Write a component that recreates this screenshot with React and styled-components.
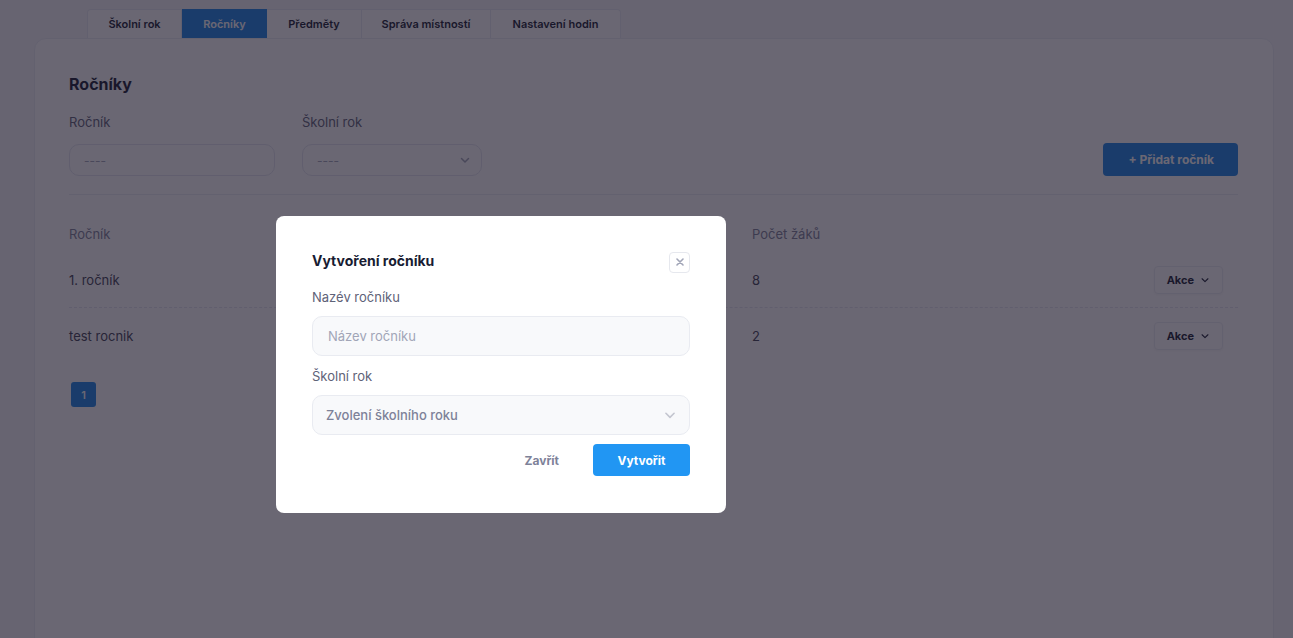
import React from "react";
import styled, { createGlobalStyle } from "styled-components";

const Global = createGlobalStyle`
  html, body { margin: 0; padding: 0; }
  body {
    background: #f5f6fa;
    font-family: Inter, "Noto Sans", "Liberation Sans", sans-serif;
    color: #181c32;
    overflow: hidden;
    height: 638px;
  }
  * { box-sizing: border-box; }
`;

const Page = styled.div`
  padding: 9px 19px 0 34px;
`;

const Tabs = styled.div`
  display: flex;
  margin-left: 53px;
`;

const Tab = styled.div`
  width: ${p => p.$w}px;
  height: 29px;
  display: flex;
  align-items: center;
  justify-content: center;
  font-size: 11px;
  font-weight: 600;
  color: ${p => (p.$active ? "#ffffff" : "#181c32")};
  background: ${p => (p.$active ? "#1b84e7" : "#ffffff")};
  border: 1px solid ${p => (p.$active ? "#1b84e7" : "#e9ebf2")};
  border-bottom: none;
  border-left: ${p => (p.$first || p.$active ? "" : "none")};
  border-radius: ${p => (p.$first ? "4px 0 0 0" : p.$last ? "0 4px 0 0" : "0")};
`;

const Card = styled.div`
  background: #ffffff;
  border: 1px solid #eceef4;
  border-radius: 12px;
  min-height: 620px;
  padding: 34px 35px 34px 34px;
`;

const Title = styled.h2`
  margin: 0;
  font-size: 16px;
  font-weight: 700;
  color: #181c32;
  line-height: 22px;
`;

const FilterRow = styled.div`
  display: flex;
  align-items: flex-end;
  gap: 27px;
  margin-top: 19px;
  padding-bottom: 18px;
  border-bottom: 1px solid #eceef3;
`;

const Field = styled.div`
  display: flex;
  flex-direction: column;
  gap: 14px;
`;

const Label = styled.label`
  font-size: 13px;
  color: #5e6278;
  line-height: 16px;
`;

const FilterBox = styled.div`
  width: ${p => p.$w}px;
  height: 32px;
  border: 1px solid #e4e6ef;
  border-radius: 10px;
  display: flex;
  align-items: center;
  justify-content: space-between;
  padding: 0 10px 0 14px;
  font-size: 12px;
  color: #a1a5b7;
  background: #ffffff;
`;

const AddButton = styled.button`
  margin-left: auto;
  height: 33px;
  padding: 0 24px 0 26px;
  border: none;
  border-radius: 4px;
  background: #1b84e7;
  color: #ffffff;
  font-family: inherit;
  font-size: 12px;
  font-weight: 700;
`;

const Table = styled.div`
  margin-top: 19px;
`;

const Row = styled.div`
  display: grid;
  grid-template-columns: 341px 342px 1fr auto;
  align-items: center;
  height: ${p => p.$h}px;
  padding-right: 15px;
  border-bottom: ${p => (p.$dashed ? "1px dashed #e4e6ef" : "none")};
  font-size: 13px;
  color: ${p => (p.$head ? "#7e8299" : "#3f4254")};
`;

const ActionButton = styled.button`
  display: flex;
  align-items: center;
  gap: 6px;
  height: 28px;
  padding: 0 12px;
  border: 1px solid #eceef3;
  border-radius: 4px;
  background: #ffffff;
  font-family: inherit;
  font-size: 11px;
  font-weight: 700;
  color: #181c32;
  box-shadow: 0 1px 3px rgba(0, 0, 0, 0.04);
`;

const Pager = styled.div`
  margin-top: 19px;
  margin-left: 2px;
  width: 25px;
  height: 25px;
  border-radius: 3px;
  background: #1b84e7;
  color: #ffffff;
  font-size: 11px;
  font-weight: 600;
  display: flex;
  align-items: center;
  justify-content: center;
`;

const Overlay = styled.div`
  position: fixed;
  inset: 0;
  background: rgba(26, 22, 40, 0.65);
  padding: 216px 0 0 276px;
`;

const Modal = styled.div`
  width: 450px;
  background: #ffffff;
  border-radius: 8px;
  padding: 35px 36px 37px;
`;

const ModalHead = styled.div`
  display: flex;
  align-items: center;
  justify-content: space-between;
  height: 22px;
`;

const ModalTitle = styled.h3`
  margin: 0;
  margin-top: -3px;
  font-size: 14px;
  font-weight: 700;
  color: #181c32;
`;

const CloseButton = styled.button`
  width: 21px;
  height: 21px;
  padding: 0;
  border: 1px solid #e6e8ee;
  border-radius: 4px;
  background: #ffffff;
  display: flex;
  align-items: center;
  justify-content: center;
`;

const ModalField = styled.div`
  display: flex;
  flex-direction: column;
  gap: 11px;
  margin-top: ${p => p.$mt}px;
`;

const ModalLabel = styled.label`
  font-size: 13px;
  color: #5e6278;
  line-height: 16px;
`;

const ModalInput = styled.div`
  height: 40px;
  border: 1px solid #e9ebf1;
  border-radius: 10px;
  background: #f8f9fb;
  display: flex;
  align-items: center;
  justify-content: space-between;
  padding: 0 12px 0 ${p => p.$pl}px;
  font-size: 13px;
  color: ${p => p.$color};
  font-weight: ${p => p.$weight || 400};
`;

const Footer = styled.div`
  display: flex;
  justify-content: flex-end;
  align-items: center;
  gap: 34px;
  margin-top: 9px;
`;

const GhostButton = styled.button`
  border: none;
  background: none;
  padding: 0;
  font-family: inherit;
  font-size: 12px;
  font-weight: 700;
  color: #7e8299;
`;

const PrimaryButton = styled.button`
  width: 97px;
  height: 32px;
  border: none;
  border-radius: 4px;
  background: #2196f3;
  color: #ffffff;
  font-family: inherit;
  font-size: 12px;
  font-weight: 700;
`;

const Chevron = ({ size = 12, color = "#a1a5b7", width = 1.5 }) => (
  <svg width={size} height={size} viewBox="0 0 12 12" fill="none">
    <path d="M2.5 4.5 L6 8 L9.5 4.5" stroke={color} strokeWidth={width} strokeLinecap="round" strokeLinejoin="round" />
  </svg>
);

const tabs = [
  { label: "Školní rok", w: 95 },
  { label: "Ročníky", w: 85, active: true },
  { label: "Předměty", w: 95 },
  { label: "Správa místností", w: 129 },
  { label: "Nastavení hodin", w: 130 },
];

const rows = [
  { name: "1. ročník", year: "2023/2024", count: "8", h: 55 },
  { name: "test rocnik", year: "2023/2024", count: "2", h: 55 },
];

export default function App() {
  return (
    <>
      <Global />
      <Page>
        <Tabs>
          {tabs.map((t, i) => (
            <Tab
              key={t.label}
              $w={t.w}
              $active={t.active}
              $first={i === 0}
              $last={i === tabs.length - 1}
            >
              {t.label}
            </Tab>
          ))}
        </Tabs>
        <Card>
          <Title>Ročníky</Title>
          <FilterRow>
            <Field>
              <Label>Ročník</Label>
              <FilterBox $w={206}>----</FilterBox>
            </Field>
            <Field>
              <Label>Školní rok</Label>
              <FilterBox $w={180}>
                ----
                <Chevron />
              </FilterBox>
            </Field>
            <AddButton>+ Přidat ročník</AddButton>
          </FilterRow>
          <Table>
            <Row $head $h={39}>
              <span>Ročník</span>
              <span>Školní rok</span>
              <span>Počet žáků</span>
              <span />
            </Row>
            {rows.map((r, i) => (
              <Row key={r.name} $h={r.h} $dashed={i === 0}>
                <span>{r.name}</span>
                <span>{r.year}</span>
                <span>{r.count}</span>
                <ActionButton>
                  Akce <Chevron size={10} color="#181c32" width={1.3} />
                </ActionButton>
              </Row>
            ))}
          </Table>
          <Pager>1</Pager>
        </Card>
      </Page>
      <Overlay>
        <Modal>
          <ModalHead>
            <ModalTitle>Vytvoření ročníku</ModalTitle>
            <CloseButton>
              <svg width="8" height="8" viewBox="0 0 8 8">
                <path d="M1 1 L7 7 M7 1 L1 7" stroke="#a1a5b7" strokeWidth="1.6" strokeLinecap="round" />
              </svg>
            </CloseButton>
          </ModalHead>
          <ModalField $mt={16}>
            <ModalLabel>Nazév ročníku</ModalLabel>
            <ModalInput $pl={15} $color="#a1a5b7">Název ročníku</ModalInput>
          </ModalField>
          <ModalField $mt={12}>
            <ModalLabel>Školní rok</ModalLabel>
            <ModalInput $pl={13} $color="#7e8299" $weight={500}>
              Zvolení školního roku
              <Chevron size={14} color="#c4c6d0" width={1.4} />
            </ModalInput>
          </ModalField>
          <Footer>
            <GhostButton>Zavřít</GhostButton>
            <PrimaryButton>Vytvořit</PrimaryButton>
          </Footer>
        </Modal>
      </Overlay>
    </>
  );
}
